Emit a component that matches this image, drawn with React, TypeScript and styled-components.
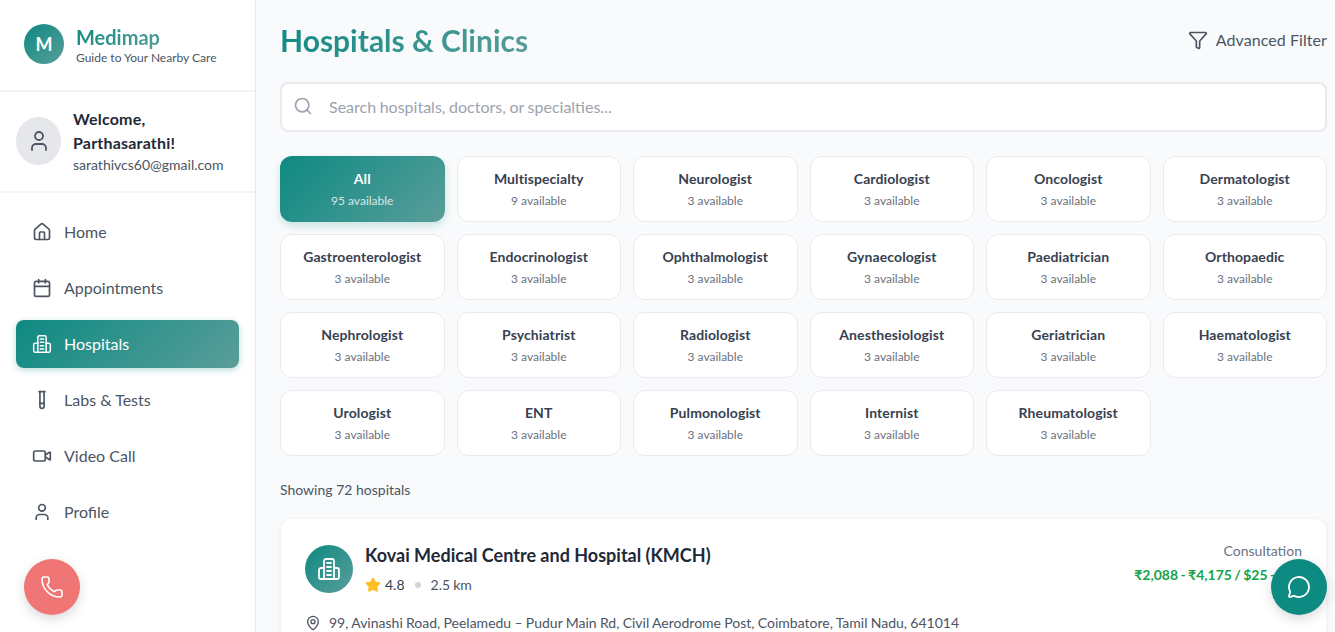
import React, { FC } from 'react';
import styled, { createGlobalStyle } from 'styled-components';
import {
  Calendar,
  Filter,
  House,
  MapPin,
  MessageCircle,
  Phone,
  Search,
  Star,
  TestTube,
  User,
  Video,
} from 'lucide-react';

const teal = 'linear-gradient(135deg, #0d8a82 0%, #5a9d9a 100%)';

const GlobalStyle = createGlobalStyle`
  html, body {
    margin: 0;
    padding: 0;
    height: 632px;
    overflow: hidden;
    background: #f9fafb;
    font-family: Lato, "Liberation Sans", sans-serif;
  }
  * { box-sizing: border-box; }
`;

const Page = styled.div`
  display: flex;
  width: 1335px;
  height: 632px;
  overflow: hidden;
`;

const Sidebar = styled.aside`
  width: 256px;
  flex-shrink: 0;
  background: #fff;
  border-right: 1px solid #e5e7eb;
  display: flex;
  flex-direction: column;
`;

const Brand = styled.div`
  height: 92px;
  padding: 24px 24px 0;
  display: flex;
  gap: 12px;
  border-bottom: 2px solid #f3f4f6;
`;

const BrandMark = styled.div`
  width: 40px;
  height: 40px;
  border-radius: 50%;
  background: ${teal};
  color: #fff;
  font-size: 18px;
  font-weight: 700;
  display: flex;
  align-items: center;
  justify-content: center;
`;

const BrandName = styled.div`
  width: fit-content;
  background: ${teal};
  background-clip: text;
  -webkit-background-clip: text;
  color: transparent;
  font-size: 20px;
  font-weight: 700;
  line-height: 26px;
`;

const BrandTag = styled.div`
  color: #4b5563;
  font-size: 12px;
  line-height: 16px;
`;

const UserBlock = styled.div`
  height: 101px;
  padding: 15px 16px 0;
  display: flex;
  gap: 12px;
  border-bottom: 2px solid #f3f4f6;
`;

const Avatar = styled.div`
  width: 45px;
  height: 48px;
  margin-top: 10px;
  border-radius: 50%;
  background: #e5e7eb;
  color: #4b5563;
  display: flex;
  align-items: center;
  justify-content: center;
`;

const UserName = styled.div`
  color: #1f2937;
  font-size: 16px;
  font-weight: 700;
  line-height: 24px;
  letter-spacing: 0.2px;
`;

const UserMail = styled.div`
  color: #4b5563;
  font-size: 14px;
  line-height: 20px;
`;

const Nav = styled.nav`
  display: flex;
  flex-direction: column;
  gap: 8px;
  padding: 15px 16px 16px;
`;

const NavItem = styled.div<{ $active?: boolean }>`
  height: 48px;
  padding: 0 16px;
  display: flex;
  align-items: center;
  gap: 12px;
  border-radius: 8px;
  font-size: 16px;
  color: ${(p) => (p.$active ? '#fff' : '#4b5563')};
  background: ${(p) => (p.$active ? teal : 'transparent')};
  box-shadow: ${(p) => (p.$active ? '0 2px 6px rgba(13, 138, 130, 0.3)' : 'none')};
`;

const NavLabel = styled.span`
  margin-bottom: 2px;
`;

const Fab = styled.button<{ $side: 'left' | 'right'; $color: string }>`
  position: fixed;
  bottom: 17px;
  ${(p) => (p.$side === 'left' ? 'left: 24px;' : 'right: 8px;')}
  width: 56px;
  height: 56px;
  padding: 0;
  border: 0;
  border-radius: 50%;
  background: ${(p) => p.$color};
  color: #fff;
  display: flex;
  align-items: center;
  justify-content: center;
  box-shadow: 0 4px 12px rgba(0, 0, 0, 0.15);
`;

const Main = styled.main`
  flex: 1;
  min-width: 0;
  padding: 0 8px 0 24px;
`;

const Header = styled.header`
  height: 82px;
  display: flex;
  align-items: center;
  justify-content: space-between;
`;

const Title = styled.h1`
  margin: 0 0 2px;
  font-size: 30px;
  font-weight: 700;
  line-height: 40px;
  background: ${teal};
  background-clip: text;
  -webkit-background-clip: text;
  color: transparent;
`;

const FilterLink = styled.div`
  display: flex;
  align-items: center;
  gap: 8px;
  margin-bottom: 2px;
  color: #4b5563;
  font-size: 16px;
  line-height: 20px;
  letter-spacing: 0.07px;
`;

const SearchBox = styled.div`
  height: 50px;
  padding: 0 16px 2px 11px;
  display: flex;
  align-items: center;
  gap: 16px;
  background: #fff;
  border: 2px solid #e8eaee;
  border-radius: 8px;
  color: #9ca3af;
  font-size: 16px;
  word-spacing: -0.5px;
`;

const Grid = styled.div`
  margin-top: 24px;
  display: grid;
  grid-template-columns: repeat(6, 1fr);
  grid-auto-rows: 66px;
  gap: 12px;
`;

const Chip = styled.div<{ $active?: boolean }>`
  display: flex;
  flex-direction: column;
  align-items: center;
  justify-content: center;
  border-radius: 12px;
  background: ${(p) => (p.$active ? teal : '#fff')};
  border: ${(p) => (p.$active ? '0' : '1px solid #e9ebef')};
  box-shadow: ${(p) => (p.$active ? '0 4px 8px rgba(13, 138, 130, 0.2)' : 'none')};
`;

const ChipName = styled.div<{ $active?: boolean }>`
  color: ${(p) => (p.$active ? '#fff' : '#374151')};
  font-size: 14px;
  font-weight: 700;
  line-height: 20px;
  letter-spacing: 0.1px;
`;

const ChipCount = styled.div<{ $active?: boolean }>`
  margin-top: 4px;
  color: ${(p) => (p.$active ? 'rgba(255, 255, 255, 0.8)' : '#6b7280')};
  font-size: 12px;
  line-height: 16px;
`;

const Showing = styled.div`
  margin-top: 24px;
  color: #4b5563;
  font-size: 14px;
  line-height: 20px;
`;

const Card = styled.article`
  margin-top: 18px;
  padding: 22px 24px 24px;
  height: 200px;
  background: #fff;
  border: 1px solid #f3f4f6;
  border-radius: 12px;
  box-shadow: 0 1px 4px rgba(0, 0, 0, 0.05);
`;

const CardTop = styled.div`
  display: flex;
  justify-content: space-between;
`;

const CardIdentity = styled.div`
  display: flex;
  gap: 12px;
`;

const CardMark = styled.div`
  width: 48px;
  height: 48px;
  margin-top: 4px;
  border-radius: 50%;
  background: ${teal};
  color: #fff;
  display: flex;
  align-items: center;
  justify-content: center;
`;

const CardName = styled.h2`
  margin: 0;
  color: #1f2937;
  font-size: 18px;
  font-weight: 700;
  line-height: 28px;
`;

const Meta = styled.div`
  margin-top: 6px;
  display: flex;
  align-items: center;
  color: #4b5563;
  font-size: 14px;
  line-height: 20px;
  word-spacing: -0.5px;
`;

const Rating = styled.span`
  margin-left: 4px;
  color: #374151;
`;

const Dot = styled.span`
  width: 6px;
  height: 6px;
  margin: 0 10px;
  border-radius: 50%;
  background: #d1d5db;
`;

const Fee = styled.div`
  text-align: right;
`;

const FeeLabel = styled.div`
  color: #6b7280;
  font-size: 14px;
  line-height: 20px;
`;

const FeeValue = styled.div`
  margin-top: 4px;
  color: #16a34a;
  font-size: 14px;
  font-weight: 700;
  line-height: 20px;
  word-spacing: -1px;
`;

const Address = styled.div`
  margin-top: 18px;
  display: flex;
  align-items: center;
  gap: 8px;
  color: #4b5563;
  font-size: 14px;
  line-height: 20px;
  word-spacing: -0.3px;
`;

const HospitalIcon: FC<{ size: number }> = ({ size }) => (
  <svg
    width={size}
    height={size}
    viewBox="0 0 24 24"
    fill="none"
    stroke="currentColor"
    strokeWidth="1.8"
    strokeLinecap="round"
    strokeLinejoin="round"
  >
    <path d="M7 22V4a2 2 0 0 1 2-2h6a2 2 0 0 1 2 2v18" />
    <path d="M7 11H4a2 2 0 0 0-2 2v7a2 2 0 0 0 2 2h16a2 2 0 0 0 2-2v-7a2 2 0 0 0-2-2h-3" />
    <path d="M10 6h4M10 10h4M10 14h4M10 18h4" />
  </svg>
);

const specialties: [string, number][] = [
  ['All', 95],
  ['Multispecialty', 9],
  ['Neurologist', 3],
  ['Cardiologist', 3],
  ['Oncologist', 3],
  ['Dermatologist', 3],
  ['Gastroenterologist', 3],
  ['Endocrinologist', 3],
  ['Ophthalmologist', 3],
  ['Gynaecologist', 3],
  ['Paediatrician', 3],
  ['Orthopaedic', 3],
  ['Nephrologist', 3],
  ['Psychiatrist', 3],
  ['Radiologist', 3],
  ['Anesthesiologist', 3],
  ['Geriatrician', 3],
  ['Haematologist', 3],
  ['Urologist', 3],
  ['ENT', 3],
  ['Pulmonologist', 3],
  ['Internist', 3],
  ['Rheumatologist', 3],
];

const App: FC = () => {
  return (
    <Page>
      <GlobalStyle />
      <Sidebar>
        <Brand>
          <BrandMark>M</BrandMark>
          <div>
            <BrandName>Medimap</BrandName>
            <BrandTag>Guide to Your Nearby Care</BrandTag>
          </div>
        </Brand>
        <UserBlock>
          <Avatar>
            <User size={24} strokeWidth={1.8} />
          </Avatar>
          <div>
            <UserName>
              Welcome,
              <br />
              Parthasarathi!
            </UserName>
            <UserMail>sarathivcs60@gmail.com</UserMail>
          </div>
        </UserBlock>
        <Nav>
          <NavItem>
            <House size={20} />
            <NavLabel>Home</NavLabel>
          </NavItem>
          <NavItem>
            <Calendar size={20} />
            <NavLabel>Appointments</NavLabel>
          </NavItem>
          <NavItem $active>
            <HospitalIcon size={20} />
            <NavLabel>Hospitals</NavLabel>
          </NavItem>
          <NavItem>
            <TestTube size={20} />
            <NavLabel>Labs &amp; Tests</NavLabel>
          </NavItem>
          <NavItem>
            <Video size={20} />
            <NavLabel>Video Call</NavLabel>
          </NavItem>
          <NavItem>
            <User size={20} />
            <NavLabel>Profile</NavLabel>
          </NavItem>
        </Nav>
      </Sidebar>
      <Main>
        <Header>
          <Title>Hospitals &amp; Clinics</Title>
          <FilterLink>
            <Filter size={20} />
            Advanced Filter
          </FilterLink>
        </Header>
        <SearchBox>
          <Search size={20} />
          Search hospitals, doctors, or specialties...
        </SearchBox>
        <Grid>
          {specialties.map(([name, count], index) => (
            <Chip key={name} $active={index === 0}>
              <ChipName $active={index === 0}>{name}</ChipName>
              <ChipCount $active={index === 0}>{count} available</ChipCount>
            </Chip>
          ))}
        </Grid>
        <Showing>Showing 72 hospitals</Showing>
        <Card>
          <CardTop>
            <CardIdentity>
              <CardMark>
                <HospitalIcon size={24} />
              </CardMark>
              <div>
                <CardName>Kovai Medical Centre and Hospital (KMCH)</CardName>
                <Meta>
                  <Star size={16} fill="#fbbf24" color="#fbbf24" />
                  <Rating>4.8</Rating>
                  <Dot />
                  2.5 km
                </Meta>
              </div>
            </CardIdentity>
            <Fee>
              <FeeLabel>Consultation</FeeLabel>
              <FeeValue>₹2,088 - ₹4,175 / $25 - $50</FeeValue>
            </Fee>
          </CardTop>
          <Address>
            <MapPin size={16} />
            99, Avinashi Road, Peelamedu – Pudur Main Rd, Civil Aerodrome Post, Coimbatore, Tamil Nadu, 641014
          </Address>
        </Card>
      </Main>
      <Fab $side="left" $color="#f07575">
        <Phone size={24} strokeWidth={1.6} />
      </Fab>
      <Fab $side="right" $color="#0d8a82">
        <MessageCircle size={24} strokeWidth={1.8} />
      </Fab>
    </Page>
  );
};

export default App;
